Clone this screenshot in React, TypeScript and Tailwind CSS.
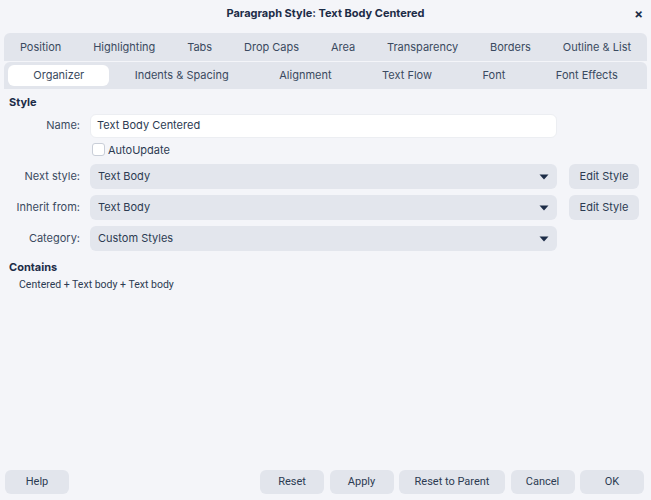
import React from "react";

const font = { fontFamily: "Inter, 'Noto Sans', sans-serif" };

function Arrow() {
  return (
    <svg width="10" height="6" viewBox="0 0 10 6" className="shrink-0">
      <path d="M0.5 0.5 H9.5 L5 5.5 Z" fill="#1c2c47" />
    </svg>
  );
}

function Combo({ value }: { value: string }) {
  return (
    <div className="flex h-[25px] w-[467px] shrink-0 items-center justify-between rounded-md bg-[#e3e6ed] pl-[8px] pr-[8px] text-[11px] text-[#2c3b52]">
      <span>{value}</span>
      <Arrow />
    </div>
  );
}

function Row({ label, children }: { label: string; children: React.ReactNode }) {
  return (
    <div className="flex items-center">
      <div className="w-[71px] shrink-0 text-right text-[11px] text-[#3a4a60]">{label}</div>
      <div className="ml-[10px] flex shrink-0 items-center">{children}</div>
    </div>
  );
}

function Btn({ label, w }: { label: string; w: string }) {
  return (
    <div
      className={`flex h-[24px] shrink-0 items-center justify-center rounded-md bg-[#e2e5ec] text-[11px] text-[#2c3b52] ${w}`}
      style={{ fontFamily: "Roboto, 'Noto Sans', sans-serif" }}
    >
      {label}
    </div>
  );
}

function EditBtn() {
  return (
    <div className="ml-[12px] flex h-[25px] w-[70px] shrink-0 items-center justify-center rounded-md bg-[#e2e5ec] text-[11px] text-[#2c3b52]">
      Edit Style
    </div>
  );
}

export default function App() {
  const tabs1 = ["Position", "Highlighting", "Tabs", "Drop Caps", "Area", "Transparency", "Borders", "Outline & List"];
  const tabs2 = ["Organizer", "Indents & Spacing", "Alignment", "Text Flow", "Font", "Font Effects"];
  return (
    <div className="flex h-[500px] w-[651px] flex-col bg-[#f4f5f9] text-[#2c3b52]" style={font}>
      {/* title */}
      <div className="relative flex h-[26px] items-center justify-center">
        <span className="text-[11px] font-bold text-[#1c2c47]">Paragraph Style: Text Body Centered</span>
        <span className="absolute right-[8px] top-[5px] text-[13px] font-bold text-[#1c2c47]">×</span>
      </div>
      {/* tabs */}
      <div className="mx-[4px] mt-[7px] flex flex-col gap-[1px]">
        <div className="flex h-[28px] items-center rounded-t-md bg-[#e2e5ec]">
          {tabs1.map((t) => (
            <div key={t} className="flex-auto text-center text-[11px] text-[#3a4a60]">
              {t}
            </div>
          ))}
        </div>
        <div className="flex h-[27px] items-center rounded-t-md bg-[#e2e5ec] px-[4px]">
          {tabs2.map((t, i) => (
            <div
              key={t}
              className={`flex h-[21px] flex-auto items-center justify-center text-[11px] text-[#3a4a60] ${
                i === 0 ? "rounded-md bg-white text-[#1c2c47]" : ""
              }`}
            >
              {t}
            </div>
          ))}
        </div>
      </div>
      {/* content */}
      <div className="flex flex-1 flex-col px-[9px]">
        <div className="mt-[5px] text-[11px] font-bold text-[#1c2c47]">Style</div>
        <div className="mt-[3px] flex flex-col">
          <Row label="Name:">
            <div className="flex h-[24px] w-[467px] items-center rounded-md border border-[#eceef2] bg-white pl-[6px] text-[11px] text-[#2c3b52]">
              Text Body Centered
            </div>
          </Row>
          <div className="ml-[83px] mt-[4px] flex items-center">
            <div className="h-[13px] w-[13px] rounded-[3px] border border-[#c9ced8] bg-white" />
            <span className="ml-[3px] text-[11px] text-[#2c3b52]">AutoUpdate</span>
          </div>
          <div className="mt-[6px] flex flex-col gap-[6px]">
            <Row label="Next style:">
              <Combo value="Text Body" />
              <EditBtn />
            </Row>
            <Row label="Inherit from:">
              <Combo value="Text Body" />
              <EditBtn />
            </Row>
            <Row label="Category:">
              <Combo value="Custom Styles" />
            </Row>
          </div>
        </div>
        <div className="mt-[8px] text-[11px] font-bold text-[#1c2c47]">Contains</div>
        <div
          className="ml-[10px] mt-[1px] text-[10.5px] text-[#2c3b52]"
          style={{ fontFamily: "Roboto, 'Noto Sans', sans-serif" }}
        >
          Centered + Text body + Text body
        </div>
      </div>
      {/* footer */}
      <div className="mb-[6px] flex items-center pl-[5px] pr-[7px]">
        <Btn label="Help" w="w-[64px]" />
        <div className="flex-1" />
        <div className="flex gap-[5.5px]">
          <Btn label="Reset" w="w-[64px]" />
          <Btn label="Apply" w="w-[64px]" />
          <Btn label="Reset to Parent" w="w-[106px]" />
          <Btn label="Cancel" w="w-[64px]" />
          <Btn label="OK" w="w-[64px]" />
        </div>
      </div>
    </div>
  );
}
